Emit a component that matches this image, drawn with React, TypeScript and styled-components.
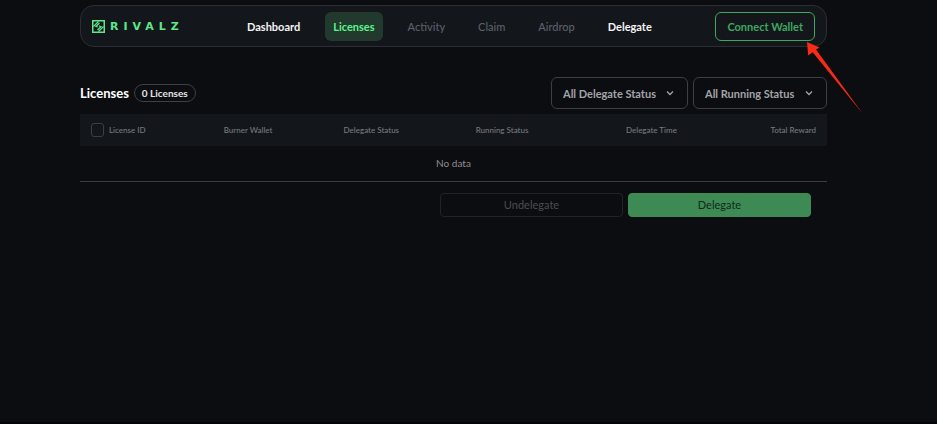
import React from 'react';
import styled, { createGlobalStyle, css } from 'styled-components';

const GlobalStyle = createGlobalStyle`
  *, *::before, *::after { box-sizing: border-box; }
  body {
    margin: 0;
    background: #0c0d11;
    color: #ffffff;
    font-family: Lato, "Open Sans", sans-serif;
    font-size: 11px;
  }
  button, select, input { font: inherit; margin: 0; }
`;

const Page = styled.div`
  position: relative;
  min-height: 100vh;
  padding: 5px 110px 0 80px;
  border-bottom: 2px solid #050305;
`;

const Header = styled.header`
  display: flex;
  align-items: center;
  height: 42px;
  padding: 0 11px;
  border: 1px solid #2b2f34;
  border-radius: 14px;
  background: #13171b;
`;

const Brand = styled.a`
  display: flex;
  flex: 0 0 147px;
  align-items: center;
  gap: 5px;
  color: #5fe68a;
  text-decoration: none;
`;

const Wordmark = styled.span`
  font-family: "DejaVu Sans", sans-serif;
  font-size: 11px;
  line-height: 13px;
  font-weight: 700;
  letter-spacing: 5px;
`;

const Nav = styled.nav`
  display: flex;
  gap: 17px;
  margin-right: auto;
`;

type NavState = 'normal' | 'active' | 'muted';

const NavLink = styled.a<{ $state: NavState }>`
  padding: 0 8px;
  border-radius: 6px;
  line-height: 29px;
  text-decoration: none;
  font-weight: 700;
  color: #f4f4f5;
  ${({ $state }) => $state === 'active' && css`
    color: #5df58c;
    background: #22392d;
  `}
  ${({ $state }) => $state === 'muted' && css`
    color: #5d5f6b;
    font-weight: 500;
  `}
`;

const ConnectButton = styled.button`
  height: 29px;
  padding: 0 11px;
  border: 1px solid #3fa85f;
  border-radius: 6px;
  background: transparent;
  color: #3fa85f;
  font-weight: 700;
`;

const Toolbar = styled.section`
  display: flex;
  align-items: center;
  justify-content: space-between;
  padding: 30px 0 5px;
`;

const Cluster = styled.div`
  display: flex;
  align-items: center;
  gap: 5px;
`;

const Title = styled.h1`
  margin: 0;
  font-size: 13px;
  line-height: 16px;
  font-weight: 700;
`;

const Badge = styled.span`
  padding: 0 7px;
  border: 1px solid #3d4045;
  border-radius: 9px;
  font-size: 10px;
  line-height: 16px;
  font-weight: 700;
  color: #e4e4e6;
`;

const SelectBox = styled.label`
  position: relative;
  display: block;
  color: #a3a4a8;
`;

const Select = styled.select`
  appearance: none;
  height: 32px;
  padding: 0 31px 0 11px;
  border: 1px solid #3d3f44;
  border-radius: 6px;
  background: #0c0d11;
  color: inherit;
  font-weight: 700;
`;

const Chevron = styled.svg`
  position: absolute;
  top: 12px;
  right: 14px;
  pointer-events: none;
`;

const Table = styled.table`
  width: 100%;
  table-layout: fixed;
  border-collapse: collapse;
`;

const HeadCell = styled.th<{ $width: number; $align?: 'left' | 'right' }>`
  width: ${({ $width }) => $width}%;
  height: 32px;
  padding: 0;
  ${({ $align }) => $align === 'left' && 'padding-left: 11px;'}
  ${({ $align }) => $align === 'right' && 'padding-right: 11px;'}
  text-align: ${({ $align }) => $align ?? 'center'};
  background: #13171b;
  color: #77797e;
  font-size: 8px;
  font-weight: 500;
  white-space: nowrap;
`;

const CheckLabel = styled.label`
  display: flex;
  align-items: center;
  gap: 5px;
`;

const Checkbox = styled.input`
  appearance: none;
  width: 13px;
  height: 14px;
  border: 1px solid #3b3e43;
  border-radius: 3px;
`;

const EmptyCell = styled.td`
  height: 35px;
  padding: 0;
  border-bottom: 1px solid #3b3c40;
  text-align: center;
  font-size: 10px;
  color: #8d8e92;
`;

const Actions = styled.div`
  display: flex;
  justify-content: flex-end;
  gap: 5px;
  padding: 11px 16px 0 0;
`;

const ActionButton = styled.button<{ $primary?: boolean }>`
  flex: 0 1 183px;
  height: 24px;
  padding: 0;
  border: 1px solid #212327;
  border-radius: 4px;
  background: transparent;
  color: #4b4c50;
  ${({ $primary }) => $primary && css`
    border-color: #3e8a55;
    background: #3e8a55;
    color: #0f2a19;
  `}
`;

const Pointer = styled.svg`
  position: absolute;
  top: 41px;
  left: calc(100% - 131px);
`;

const links: { label: string; state: NavState }[] = [
  { label: 'Dashboard', state: 'normal' },
  { label: 'Licenses', state: 'active' },
  { label: 'Activity', state: 'muted' },
  { label: 'Claim', state: 'muted' },
  { label: 'Airdrop', state: 'muted' },
  { label: 'Delegate', state: 'normal' },
];

function LogoMark() {
  return (
    <svg width="13" height="13" viewBox="0 0 13 13" fill="none" stroke="currentColor" aria-hidden="true">
      <rect x="0.75" y="0.75" width="11.5" height="11.5" strokeWidth="1.5" />
      <path d="M1.5 6.5L6.5 1.5M11.5 6.5L6.5 11.5M7.5 3L4 6.5L6 7M5.5 10L9 6.5L7 6" strokeWidth="1.2" />
    </svg>
  );
}

function StatusSelect({ name, option }: { name: string; option: string }) {
  return (
    <SelectBox>
      <Select aria-label={name}>
        <option>{option}</option>
      </Select>
      <Chevron width="8" height="8" viewBox="0 0 8 8" fill="none" stroke="currentColor" strokeWidth="1.3">
        <path d="M1 2.5L4 5.5L7 2.5" />
      </Chevron>
    </SelectBox>
  );
}

export default function App() {
  return (
    <>
      <GlobalStyle />
      <Page>
        <Header>
          <Brand href="#">
            <LogoMark />
            <Wordmark>RIVALZ</Wordmark>
          </Brand>
          <Nav>
            {links.map(({ label, state }) => (
              <NavLink key={label} href="#" $state={state}>{label}</NavLink>
            ))}
          </Nav>
          <ConnectButton type="button">Connect Wallet</ConnectButton>
        </Header>

        <main>
          <Toolbar>
            <Cluster>
              <Title>Licenses</Title>
              <Badge>0 Licenses</Badge>
            </Cluster>
            <Cluster>
              <StatusSelect name="Delegate status" option="All Delegate Status" />
              <StatusSelect name="Running status" option="All Running Status" />
            </Cluster>
          </Toolbar>

          <Table>
            <thead>
              <tr>
                <HeadCell $width={14} $align="left">
                  <CheckLabel>
                    <Checkbox type="checkbox" />
                    License ID
                  </CheckLabel>
                </HeadCell>
                <HeadCell $width={17}>Burner Wallet</HeadCell>
                <HeadCell $width={16}>Delegate Status</HeadCell>
                <HeadCell $width={19}>Running Status</HeadCell>
                <HeadCell $width={21}>Delegate Time</HeadCell>
                <HeadCell $width={13} $align="right">Total Reward</HeadCell>
              </tr>
            </thead>
            <tbody>
              <tr>
                <EmptyCell colSpan={6}>No data</EmptyCell>
              </tr>
            </tbody>
          </Table>

          <Actions>
            <ActionButton type="button">Undelegate</ActionButton>
            <ActionButton type="button" $primary>Delegate</ActionButton>
          </Actions>
        </main>

        <Pointer width="58" height="74" viewBox="806 41 58 74" aria-hidden="true">
          <path d="M807 42L819.5 47.5L816 49.5L862.5 113.5L812.7 52.3L808.2 55.5Z" fill="#fb2a17" />
        </Pointer>
      </Page>
    </>
  );
}
